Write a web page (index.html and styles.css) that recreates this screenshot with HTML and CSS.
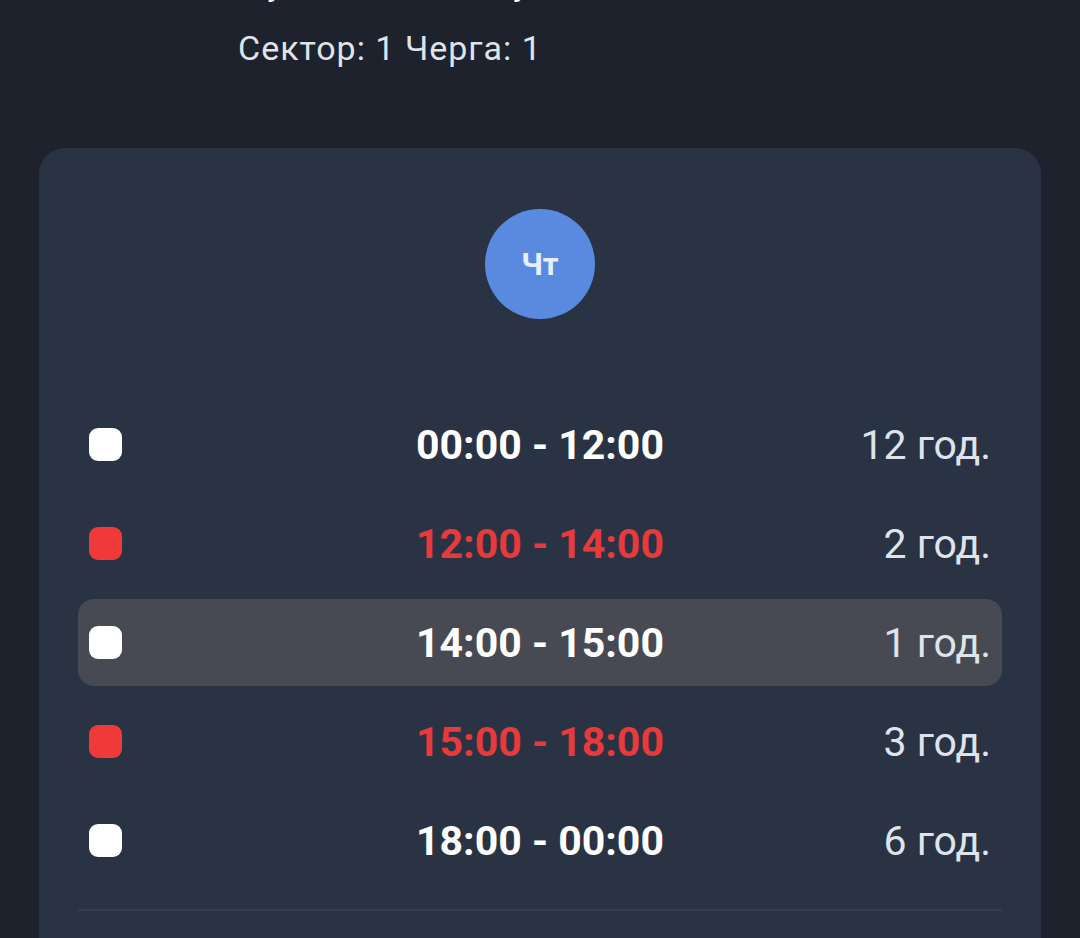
FILE: index.html
```html
<!DOCTYPE html>
<html lang="uk">
<head>
<meta charset="utf-8">
<link rel="stylesheet" href="styles.css">
</head>
<body>
<div class="page">
  <div class="header">
    <div class="address">вул. Сихівська, буд. 1</div>
    <div class="meta">Сектор: 1 Черга: 1</div>
  </div>
  <div class="card">
    <div class="day-wrap"><div class="day">Чт</div></div>
    <div class="rows">
      <div class="row"><span class="dot"></span><span class="time">00:00 - 12:00</span><span class="dur">12 год.</span></div>
      <div class="row off"><span class="dot"></span><span class="time">12:00 - 14:00</span><span class="dur">2 год.</span></div>
      <div class="row current"><span class="dot"></span><span class="time">14:00 - 15:00</span><span class="dur">1 год.</span></div>
      <div class="row off"><span class="dot"></span><span class="time">15:00 - 18:00</span><span class="dur">3 год.</span></div>
      <div class="row"><span class="dot"></span><span class="time">18:00 - 00:00</span><span class="dur">6 год.</span></div>
    </div>
    <div class="divider"></div>
    <div class="spacer"></div>
  </div>
</div>
</body>
</html>
```
FILE: styles.css
```css
html, body {
  margin: 0;
  padding: 0;
  background: #1d222d;
  font-family: Roboto, "Noto Sans", sans-serif;
  color: #dfe3ea;
  overflow: hidden;
}
.page {
  width: 1080px;
  height: 938px;
  overflow: hidden;
}
.header {
  padding-left: 238px;
  margin-top: -40px;
}
.address {
  font-size: 34px;
  line-height: 46px;
  color: #ffffff;
  padding-left: 10px;
}
.meta {
  font-size: 34px;
  line-height: 44px;
  margin-top: 20px;
  letter-spacing: 1px;
}
.card {
  margin: 78px 39px 0;
  background: #2a3344;
  border-radius: 26px;
  padding: 0 39px;
}
.day-wrap {
  display: flex;
  justify-content: center;
  padding-top: 61px;
}
.day {
  width: 110px;
  height: 110px;
  border-radius: 50%;
  background: #5a8ae0;
  color: #e6f0ff;
  font-weight: 700;
  font-size: 31px;
  display: flex;
  align-items: center;
  justify-content: center;
}
.rows {
  margin-top: 82px;
  display: flex;
  flex-direction: column;
  gap: 12px;
}
.row {
  height: 87px;
  display: flex;
  align-items: center;
  padding: 0 11px 0 11px;
  border-radius: 16px;
  position: relative;
}
.row.current {
  background: #474a52;
}
.dot {
  width: 33px;
  height: 33px;
  border-radius: 9px;
  background: #ffffff;
  flex: none;
}
.row.off .dot {
  background: #f03a3a;
}
.time {
  position: absolute;
  left: 0;
  right: 0;
  text-align: center;
  font-weight: 700;
  font-size: 41px;
  color: #ffffff;
  pointer-events: none;
}
.row.off .time {
  color: #e8393b;
}
.dur {
  margin-left: auto;
  font-size: 41px;
  color: #dfe3ea;
}
.divider {
  margin-top: 25px;
  height: 2px;
  background: #353e4f;
}
.spacer {
  height: 120px;
}
```
